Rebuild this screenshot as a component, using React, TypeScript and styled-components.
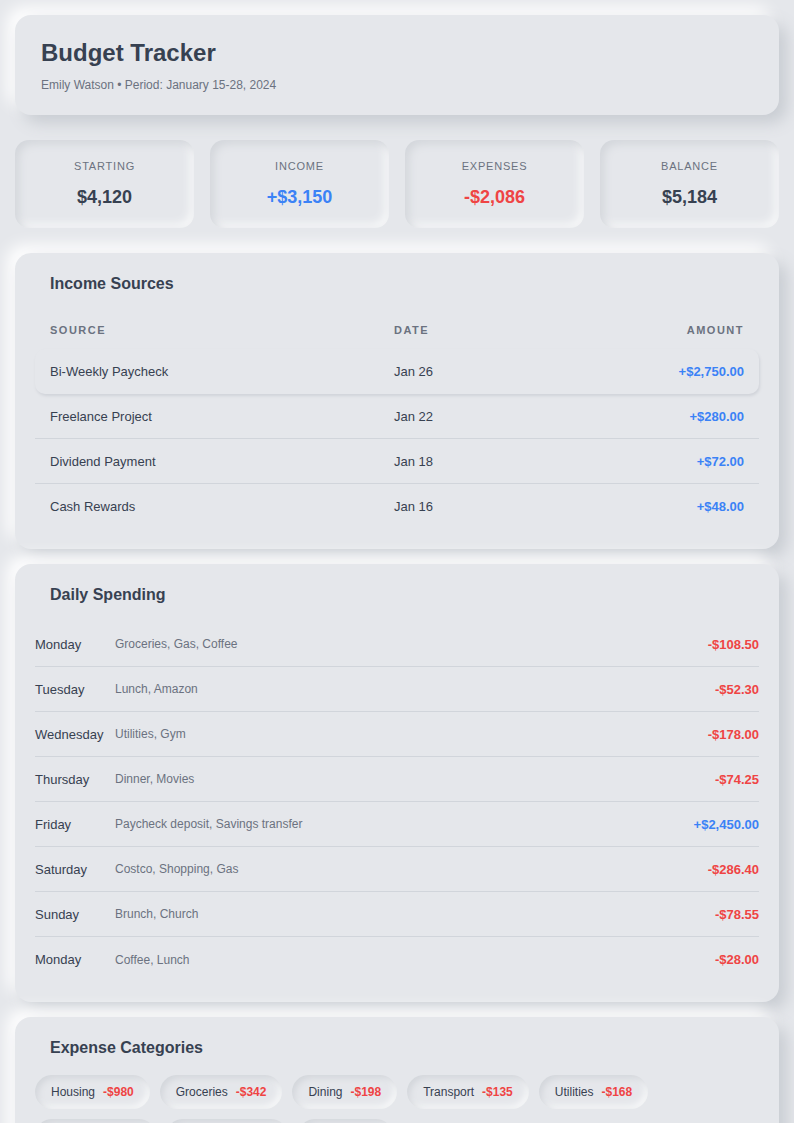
import * as React from 'react';
import styled, { createGlobalStyle } from 'styled-components';

// style
const GlobalStyle = createGlobalStyle`
  html, body {
    margin: 0;
    padding: 0;
    background: #e5e7eb;
  }

  body {
    font-family: "Liberation Sans", Arial, Helvetica, sans-serif;
    color: #374151;
  }
`;

const Page = styled.div`
  padding: 15px;
  display: flex;
  flex-direction: column;
`;

const Card = styled.section<{ $spacing?: number }>`
  background: #e5e7eb;
  border-radius: 16px;
  padding: 21px 20px 20px;
  margin-bottom: ${(p) => p.$spacing ?? 15}px;
  box-shadow: 8px 8px 16px #c8ccd2, -8px -8px 16px #ffffff;
`;

const HeaderCard = styled(Card)`
  padding: 23px 26px 22px;
`;

const Title = styled.h1`
  margin: 0 0 11px;
  font-size: 24px;
  line-height: 29px;
  font-weight: 700;
  color: #374151;
`;

const Subtitle = styled.div`
  font-size: 12px;
  line-height: 15px;
  color: #6b7280;
`;

const StatsRow = styled.div`
  display: grid;
  grid-template-columns: repeat(4, 1fr);
  gap: 16px;
  margin-bottom: 25px;
`;

const Stat = styled.div`
  background: #e5e7eb;
  border-radius: 14px;
  height: 88px;
  display: flex;
  flex-direction: column;
  align-items: center;
  justify-content: center;
  box-shadow: inset 4px 4px 8px #d3d6db, inset -4px -4px 8px #f7f8f9;
`;

const StatLabel = styled.div`
  font-size: 11px;
  line-height: 13px;
  letter-spacing: 0.8px;
  text-transform: uppercase;
  color: #6b7280;
  margin-bottom: 13px;
`;

const tones = {
  neutral: '#374151',
  positive: '#3b82f6',
  negative: '#ef4444',
};

type Tone = keyof typeof tones;

const StatValue = styled.div<{ $tone: Tone }>`
  font-size: 18px;
  line-height: 22px;
  font-weight: 700;
  color: ${(p) => tones[p.$tone]};
`;

const SectionTitle = styled.h2`
  margin: 0 0 17px;
  padding: 0 15px;
  font-size: 16px;
  line-height: 20px;
  font-weight: 700;
  color: #374151;
`;

const TableHead = styled.div`
  display: grid;
  grid-template-columns: 344px 1fr 1fr;
  height: 38px;
  align-items: center;
`;

const HeadCell = styled.div<{ $right?: boolean }>`
  padding: 0 15px;
  font-size: 11px;
  font-weight: 700;
  letter-spacing: 1.5px;
  text-transform: uppercase;
  color: #6b7280;
  text-align: ${(p) => (p.$right ? 'right' : 'left')};
`;

const IncomeRow = styled.div<{ $raised?: boolean }>`
  display: grid;
  grid-template-columns: 344px 1fr 1fr;
  height: 45px;
  align-items: center;
  font-size: 13px;
  color: #374151;
  border-bottom: 1px solid ${(p) => (p.$raised ? 'transparent' : '#d1d5db')};
  border-radius: ${(p) => (p.$raised ? '10px' : '0')};
  box-shadow: ${(p) => (p.$raised ? '1px 2px 3px #d0d3d9' : 'none')};
  box-sizing: border-box;

  &:last-child {
    border-bottom: none;
  }
`;

const Cell = styled.div<{ $right?: boolean }>`
  padding: 0 15px;
  text-align: ${(p) => (p.$right ? 'right' : 'left')};
`;

const Amount = styled.span<{ $tone: Tone }>`
  font-weight: 700;
  color: ${(p) => tones[p.$tone]};
`;

const DayRow = styled.div`
  display: flex;
  align-items: center;
  height: 45px;
  border-bottom: 1px solid #d1d5db;
  box-sizing: border-box;
  font-size: 13px;

  &:last-child {
    border-bottom: none;
  }
`;

const DayName = styled.div`
  width: 80px;
  flex-shrink: 0;
  color: #374151;
`;

const DayDetail = styled.div`
  flex: 1;
  font-size: 12px;
  color: #6b7280;
`;

const ChipList = styled.div`
  display: flex;
  flex-wrap: wrap;
  gap: 10px;
`;

const Chip = styled.div`
  display: flex;
  align-items: center;
  height: 34px;
  padding: 0 16px;
  border-radius: 17px;
  font-size: 12px;
  color: #374151;
  background: #e5e7eb;
  box-shadow: inset 3px 3px 6px #d3d6db, inset -3px -3px 6px #f7f8f9;
`;

const ChipAmount = styled.span`
  margin-left: 8px;
  font-weight: 700;
  color: #ef4444;
`;

const stats: { label: string; value: string; tone: Tone }[] = [
  { label: 'Starting', value: '$4,120', tone: 'neutral' },
  { label: 'Income', value: '+$3,150', tone: 'positive' },
  { label: 'Expenses', value: '-$2,086', tone: 'negative' },
  { label: 'Balance', value: '$5,184', tone: 'neutral' },
];

const income = [
  { source: 'Bi-Weekly Paycheck', date: 'Jan 26', amount: '+$2,750.00' },
  { source: 'Freelance Project', date: 'Jan 22', amount: '+$280.00' },
  { source: 'Dividend Payment', date: 'Jan 18', amount: '+$72.00' },
  { source: 'Cash Rewards', date: 'Jan 16', amount: '+$48.00' },
];

const days: { day: string; detail: string; amount: string; tone: Tone }[] = [
  { day: 'Monday', detail: 'Groceries, Gas, Coffee', amount: '-$108.50', tone: 'negative' },
  { day: 'Tuesday', detail: 'Lunch, Amazon', amount: '-$52.30', tone: 'negative' },
  { day: 'Wednesday', detail: 'Utilities, Gym', amount: '-$178.00', tone: 'negative' },
  { day: 'Thursday', detail: 'Dinner, Movies', amount: '-$74.25', tone: 'negative' },
  { day: 'Friday', detail: 'Paycheck deposit, Savings transfer', amount: '+$2,450.00', tone: 'positive' },
  { day: 'Saturday', detail: 'Costco, Shopping, Gas', amount: '-$286.40', tone: 'negative' },
  { day: 'Sunday', detail: 'Brunch, Church', amount: '-$78.55', tone: 'negative' },
  { day: 'Monday', detail: 'Coffee, Lunch', amount: '-$28.00', tone: 'negative' },
];

const categories = [
  { name: 'Housing', amount: '-$980' },
  { name: 'Groceries', amount: '-$342' },
  { name: 'Dining', amount: '-$198' },
  { name: 'Transport', amount: '-$135' },
  { name: 'Utilities', amount: '-$168' },
  { name: 'Shopping', amount: '-$124' },
  { name: 'Healthcare', amount: '-$95' },
  { name: 'Other', amount: '-$44' },
];

export default function App() {
  return (
    <>
      <GlobalStyle />
      <Page>
        <HeaderCard $spacing={25}>
          <Title>Budget Tracker</Title>
          <Subtitle>Emily Watson • Period: January 15-28, 2024</Subtitle>
        </HeaderCard>

        <StatsRow>
          {stats.map((s) => (
            <Stat key={s.label}>
              <StatLabel>{s.label}</StatLabel>
              <StatValue $tone={s.tone}>{s.value}</StatValue>
            </Stat>
          ))}
        </StatsRow>

        <Card>
          <SectionTitle>Income Sources</SectionTitle>
          <TableHead>
            <HeadCell>Source</HeadCell>
            <HeadCell>Date</HeadCell>
            <HeadCell $right>Amount</HeadCell>
          </TableHead>
          {income.map((row, i) => (
            <IncomeRow key={row.source} $raised={i === 0}>
              <Cell>{row.source}</Cell>
              <Cell>{row.date}</Cell>
              <Cell $right>
                <Amount $tone="positive">{row.amount}</Amount>
              </Cell>
            </IncomeRow>
          ))}
        </Card>

        <Card>
          <SectionTitle>Daily Spending</SectionTitle>
          <div>
            {days.map((d, i) => (
              <DayRow key={i}>
                <DayName>{d.day}</DayName>
                <DayDetail>{d.detail}</DayDetail>
                <Amount $tone={d.tone}>{d.amount}</Amount>
              </DayRow>
            ))}
          </div>
        </Card>

        <Card>
          <SectionTitle>Expense Categories</SectionTitle>
          <ChipList>
            {categories.map((c) => (
              <Chip key={c.name}>
                {c.name}
                <ChipAmount>{c.amount}</ChipAmount>
              </Chip>
            ))}
          </ChipList>
        </Card>
      </Page>
    </>
  );
}
